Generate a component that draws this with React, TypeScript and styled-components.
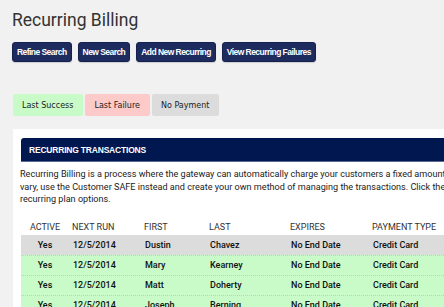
import styled, { createGlobalStyle } from 'styled-components';

const GlobalStyle = createGlobalStyle`
  html, body {
    margin: 0;
    padding: 0;
    background: #f1f1f1;
    font-family: Roboto, 'Liberation Sans', Arial, sans-serif;
    color: #222;
    overflow: hidden;
  }
`;

type Tone = 'success' | 'failure' | 'none';

const toneColors: Record<Tone, string> = {
  success: '#c8fbc8',
  failure: '#fdcaca',
  none: '#dcdcdc',
};

const rows = [
  { active: 'Yes', next: '12/5/2014', first: 'Dustin', last: 'Chavez', expires: 'No End Date', type: 'Credit Card', tone: 'none' as Tone },
  { active: 'Yes', next: '12/5/2014', first: 'Mary', last: 'Kearney', expires: 'No End Date', type: 'Credit Card', tone: 'success' as Tone },
  { active: 'Yes', next: '12/5/2014', first: 'Matt', last: 'Doherty', expires: 'No End Date', type: 'Credit Card', tone: 'success' as Tone },
  { active: 'Yes', next: '12/5/2014', first: 'Joseph', last: 'Berning', expires: 'No End Date', type: 'Credit Card', tone: 'success' as Tone },
];

const introLines = [
  'Recurring Billing is a process where the gateway can automatically charge your customers a fixed amount on a regular schedule. If the amount will',
  "vary, use the Customer SAFE instead and create your own method of managing the transactions. Click the 'Add New Recurring' button to view the",
  'recurring plan options.',
];

export default function App() {
  return (
    <>
      <GlobalStyle />
      <Page>
        <Title>Recurring Billing</Title>
        <Toolbar>
          <ActionButton>Refine Search</ActionButton>
          <ActionButton>New Search</ActionButton>
          <ActionButton>Add New Recurring</ActionButton>
          <ActionButton>View Recurring Failures</ActionButton>
        </Toolbar>
        <Legend>
          <LegendItem $tone='success'>Last Success</LegendItem>
          <LegendItem $tone='failure'>Last Failure</LegendItem>
          <LegendItem $tone='none'>No Payment</LegendItem>
        </Legend>
        <Panel>
          <PanelHeader>RECURRING TRANSACTIONS</PanelHeader>
          <Intro>
            {introLines.map((line, i) => (
              <IntroLine key={i}>{line}</IntroLine>
            ))}
          </Intro>
          <Table>
            <HeadRow>
              <HeadCell $center>ACTIVE</HeadCell>
              <HeadCell>NEXT RUN</HeadCell>
              <HeadCell>FIRST</HeadCell>
              <HeadCell>LAST</HeadCell>
              <HeadCell>EXPIRES</HeadCell>
              <HeadCell>PAYMENT TYPE</HeadCell>
            </HeadRow>
            {rows.map((r, i) => (
              <DataRow key={i} $tone={r.tone}>
                <Cell $center>{r.active}</Cell>
                <Cell>{r.next}</Cell>
                <Cell>{r.first}</Cell>
                <Cell>{r.last}</Cell>
                <Cell>{r.expires}</Cell>
                <Cell>{r.type}</Cell>
              </DataRow>
            ))}
          </Table>
        </Panel>
      </Page>
    </>
  );
}

const Page = styled.div`
  padding: 10px 0 0 12px;
  width: 760px;
`;

const Title = styled.h1`
  margin: 0;
  font-size: 17.5px;
  line-height: 21px;
  font-weight: 400;
  color: #333;
`;

const Toolbar = styled.div`
  display: flex;
  gap: 6px;
  margin-top: 11px;
`;

const ActionButton = styled.button`
  height: 20px;
  padding: 0 4px;
  border: 1px solid #15224f;
  border-radius: 3px;
  background: #1d2b5e;
  color: #fff;
  font-family: 'Liberation Sans', Arial, sans-serif;
  font-size: 8.5px;
  font-weight: 700;
  letter-spacing: -0.55px;
  box-shadow: 0 1px 1px rgba(0, 0, 0, 0.15);
`;

const Legend = styled.div`
  display: flex;
  gap: 2px;
  margin: 32px 0 0 1px;
`;

const LegendItem = styled.div<{ $tone: Tone }>`
  height: 22px;
  display: flex;
  align-items: center;
  padding: 0 10px 0 9px;
  border-radius: 2px;
  background: ${p => toneColors[p.$tone]};
  font-family: 'DejaVu Sans', Verdana, sans-serif;
  font-size: 8px;
  color: #222;
`;

const Panel = styled.div`
  margin: 13px 0 0 1px;
  padding: 9px 0 0 7px;
  background: #fff;
  height: 200px;
`;

const PanelHeader = styled.div`
  height: 24px;
  margin-left: 1px;
  display: flex;
  align-items: center;
  padding-left: 8px;
  border-radius: 3px 3px 0 0;
  background: #001750;
  border-bottom: 1px solid #5b6a96;
  box-sizing: border-box;
  color: #fff;
  font-family: 'Liberation Sans', Arial, sans-serif;
  font-size: 8.5px;
  font-weight: 700;
  letter-spacing: -0.2px;
`;

const Intro = styled.div`
  margin-top: 6px;
  font-size: 9.1px;
  line-height: 12.5px;
  color: #222;
`;

const IntroLine = styled.div`
  white-space: nowrap;
`;

const cols = '48px 72px 65px 81px 82px 140px';

const Table = styled.div`
  margin: 13px 0 0 1px;
`;

const HeadRow = styled.div`
  display: grid;
  grid-template-columns: ${cols};
  height: 16px;
  align-items: center;
`;

const HeadCell = styled.div<{ $center?: boolean }>`
  padding-left: ${p => (p.$center ? '0' : '3px')};
  text-align: ${p => (p.$center ? 'center' : 'left')};
  font-size: 9px;
  color: #333;
`;

const DataRow = styled.div<{ $tone: Tone }>`
  display: grid;
  grid-template-columns: ${cols};
  height: 19px;
  align-items: center;
  background: ${p => toneColors[p.$tone]};
  border-top: 1px dotted ${p => (p.$tone === 'success' ? '#a9dea9' : 'transparent')};
`;

const Cell = styled.div<{ $center?: boolean }>`
  padding-left: ${p => (p.$center ? '0' : '4px')};
  text-align: ${p => (p.$center ? 'center' : 'left')};
  font-size: 9px;
  font-weight: 500;
  color: #111;
`;
